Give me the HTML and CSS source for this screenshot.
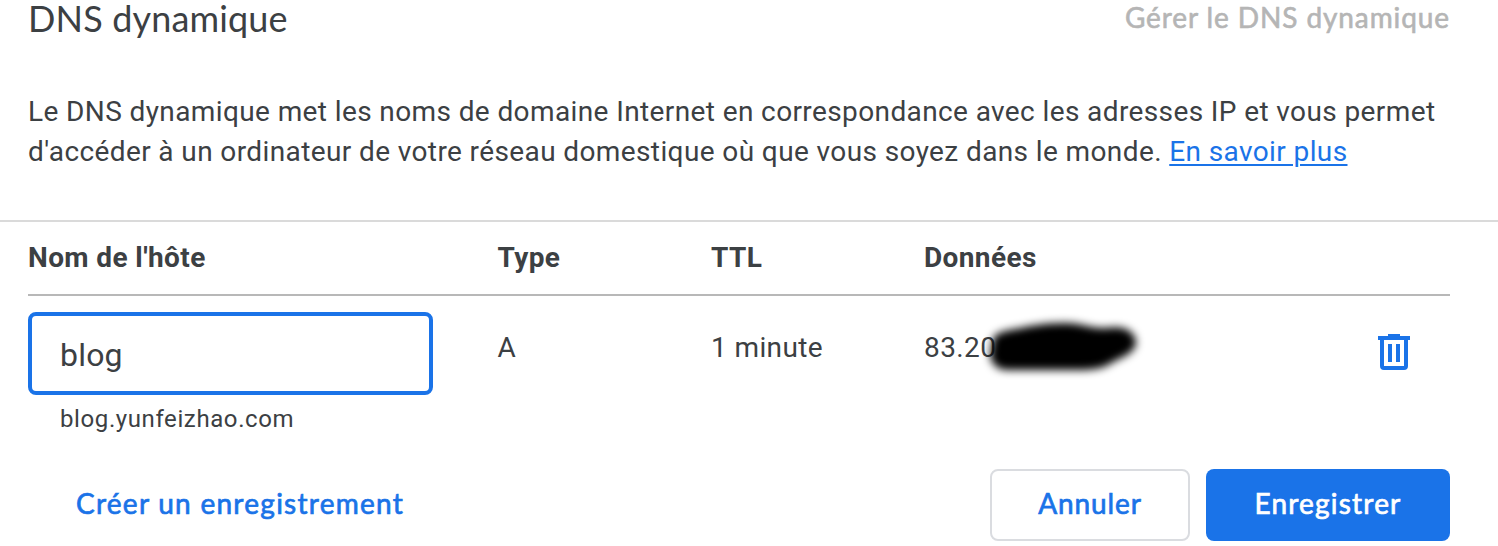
FILE: index.html
```html
<!DOCTYPE html>
<html lang="fr">
<head>
<meta charset="utf-8">
<title>DNS dynamique</title>
<link rel="stylesheet" href="styles.css">
</head>
<body>
<section class="panel">
  <header class="panel-header">
    <h2 class="title">DNS dynamique</h2>
    <span class="manage">Gérer le DNS dynamique</span>
  </header>
  <p class="description">Le DNS dynamique met les noms de domaine Internet en correspondance avec les adresses IP et vous permet<br>d'accéder à un ordinateur de votre réseau domestique où que vous soyez dans le monde. <a class="more" href="#">En savoir plus</a></p>
  <div class="records">
    <div class="grid head">
      <span>Nom de l'hôte</span><span>Type</span><span>TTL</span><span>Données</span>
    </div>
    <div class="grid row">
      <div class="host">
        <input class="host-input" type="text" value="blog" aria-label="Nom de l'hôte">
        <span class="host-full">blog.yunfeizhao.com</span>
      </div>
      <span class="cell">A</span>
      <span class="cell">1 minute</span>
      <span class="cell address">83.20<svg class="redaction" width="190" height="90" viewBox="0 0 190 90" aria-hidden="true"><defs><filter id="soft" x="-20%" y="-30%" width="140%" height="160%"><feGaussianBlur stdDeviation="4"/></filter></defs><path filter="url(#soft)" d="M31 39C33 33 42 31 54 29C68 26 83 23 103 23C119 23 129 29 145 28C161 25 174 31 174 43C173 53 160 57 151 62C142 68 133 70 117 70H46C35 70 30 64 28 56Z"/></svg></span>
      <button class="delete" aria-label="Supprimer"><svg width="32" height="36" viewBox="0 0 32 36"><path d="M10 0h12v2h10v4h-2v26a4 4 0 0 1-4 4H6a4 4 0 0 1-4-4V6H0V2h10zM6 6v26h20V6zM10 10h4v18h-4zM18 10h4v18h-4z" fill="#1a73e8" fill-rule="evenodd"/></svg></button>
    </div>
  </div>
  <footer class="actions">
    <button class="create">Créer un enregistrement</button>
    <div class="confirm">
      <button class="button cancel">Annuler</button>
      <button class="button save">Enregistrer</button>
    </div>
  </footer>
</section>
</body>
</html>
```
FILE: styles.css
```css
* { box-sizing: border-box; }
body { margin: 0; background: #fff; color: #3c4043; font: 28px/40px Roboto, sans-serif; letter-spacing: .39px; overflow: hidden; }
button { padding: 0; border: 0; background: none; font: inherit; letter-spacing: inherit; }
.panel-header { display: flex; justify-content: space-between; height: 92px; padding: 0 48px 0 28px; }
.title { margin: 0; font: 400 36px/36px Lato, sans-serif; letter-spacing: .15px; }
.manage { font: 400 28px/35px Lato, sans-serif; letter-spacing: .9px; color: #b5b5b5; -webkit-text-stroke: .6px; }
.description { margin: 0; height: 128px; padding-left: 28px; white-space: nowrap; }
.more { color: #1a73e8; text-decoration-thickness: 2px; text-underline-offset: 3px; }
.records { border-top: 2px solid #dadada; padding: 0 48px 0 28px; }
.grid { display: grid; grid-template-columns: 469.5px 213.5px 213px 1fr auto; }
.head { height: 74px; padding-top: 16px; border-bottom: 2px solid #b8b8b8; font-weight: 700; }
.row { height: 173px; padding-top: 16px; }
.host { display: flex; flex-direction: column; }
.host-input { width: 405px; height: 83px; padding: 2px 28px 0; border: 4px solid #1a73e8; border-radius: 8px; outline: 0; background: #fff; color: #3c4043; font: 32px/40px Roboto, sans-serif; letter-spacing: .2px; }
.host-full { padding: 4px 0 0 32px; font-size: 24px; letter-spacing: .6px; }
.cell { padding-top: 16px; }
.address { position: relative; white-space: nowrap; }
.redaction { position: absolute; left: 38px; top: -12px; }
.delete { align-self: start; display: flex; margin: 22px 40px 0 0; }
.actions { display: flex; justify-content: space-between; align-items: center; padding: 0 48px 0 76px; height: 72px; font: 400 28px/40px Lato, sans-serif; letter-spacing: 1.2px; }
.create { padding-bottom: 4px; color: #1a73e8; letter-spacing: 1.27px; -webkit-text-stroke: .7px; }
.confirm { display: flex; gap: 16px; }
.button { height: 72px; padding-bottom: 4px; border-radius: 8px; -webkit-text-stroke: .7px; }
.cancel { width: 200px; border: 2px solid #dadce0; color: #1a73e8; letter-spacing: .9px; }
.save { width: 244px; background: #1a73e8; color: #fff; }
```
